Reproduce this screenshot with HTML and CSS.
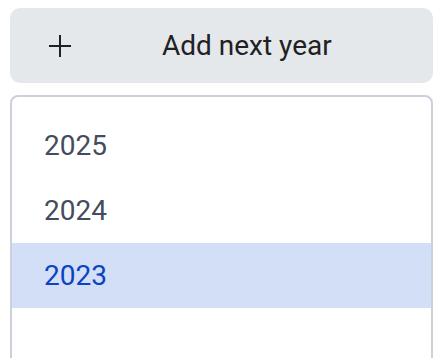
FILE: index.html
```html
<!DOCTYPE html>
<html>
<head>
<meta charset="utf-8">
<link rel="stylesheet" href="styles.css">
</head>
<body>
<div class="panel">
  <button class="add-btn" type="button">
    <svg class="add-icon" width="24" height="24" viewBox="0 0 24 24" aria-hidden="true">
      <path d="M12 1v22M1 12h22" stroke="#1f2124" stroke-width="2" fill="none"/>
    </svg>
    <span class="add-label">Add next year</span>
  </button>
  <ul class="year-list">
    <li class="year-item">2025</li>
    <li class="year-item">2024</li>
    <li class="year-item selected">2023</li>
  </ul>
</div>
</body>
</html>
```
FILE: styles.css
```css
html, body {
  margin: 0;
  padding: 0;
  overflow: hidden;
  background: #ffffff;
}
body {
  font-family: Roboto, "Liberation Sans", sans-serif;
}
.panel {
  padding: 8px 9px 0 10px;
  display: flex;
  flex-direction: column;
  gap: 12px;
}
.add-btn {
  display: flex;
  align-items: center;
  height: 75px;
  padding: 0 0 0 38px;
  border: none;
  border-radius: 10px;
  background: #e5e8eb;
  font-family: inherit;
  font-size: 28px;
  color: #1f2124;
  cursor: pointer;
}
.add-icon {
  flex: none;
  display: block;
}
.add-label {
  margin-left: 90px;
  line-height: 1;
}
.year-list {
  list-style: none;
  margin: 0;
  padding: 16px 0 0 0;
  height: 300px;
  border: 2px solid #cdd0da;
  border-radius: 8px;
}
.year-item {
  height: 65px;
  line-height: 65px;
  padding-left: 32px;
  font-size: 28px;
  color: #454c5d;
}
.year-item.selected {
  background: #d3dff7;
  color: #0b43c4;
}
```
